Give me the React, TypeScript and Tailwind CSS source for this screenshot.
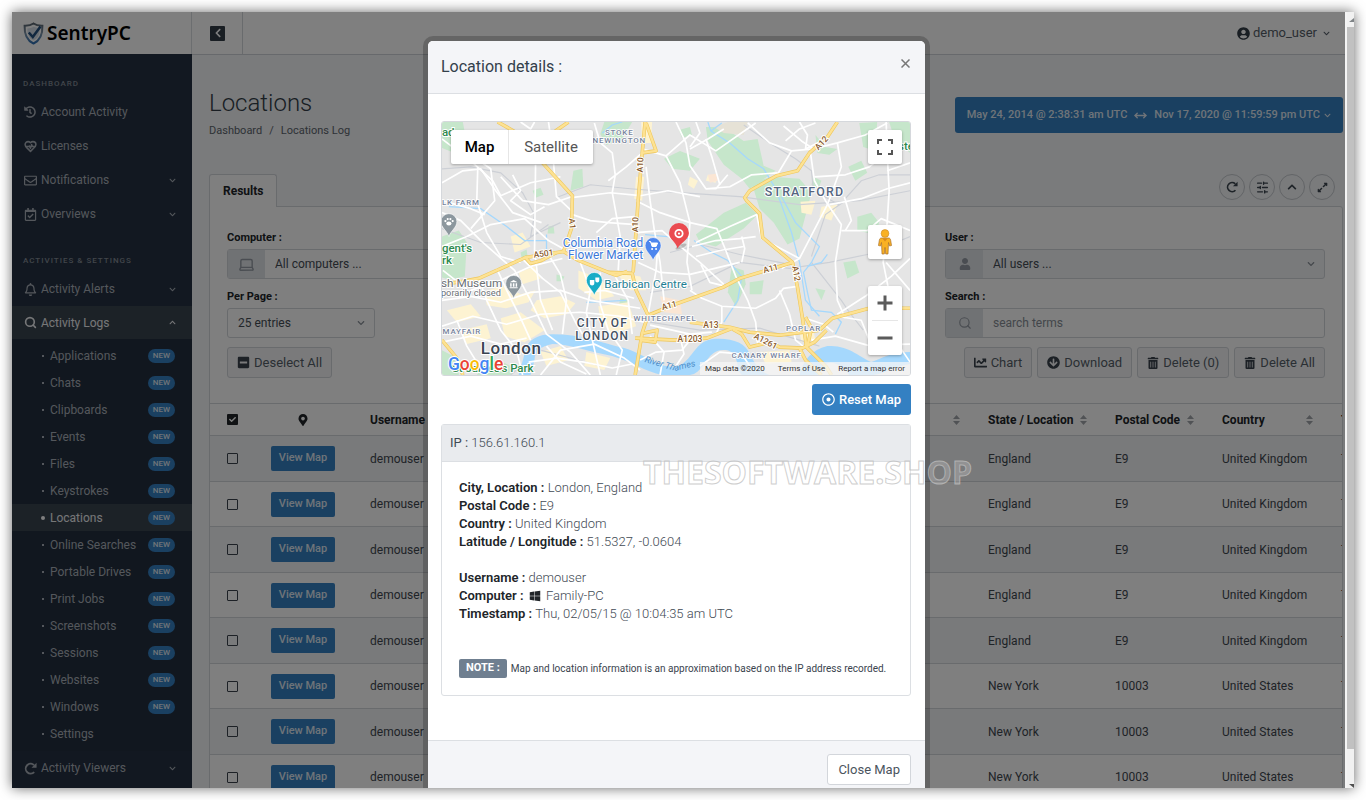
import type { ReactNode } from "react";
import {
  FaArrowCircleDown,
  FaChartLine,
  FaCheck,
  FaChevronDown,
  FaChevronLeft,
  FaChevronUp,
  FaExpandAlt,
  FaHistory,
  FaMapMarkerAlt,
  FaMinusSquare,
  FaRegBell,
  FaRegCalendarCheck,
  FaRegDotCircle,
  FaRegEnvelope,
  FaTrashAlt,
  FaUser,
  FaUserCircle,
  FaWindows,
} from "react-icons/fa";
import { LuHeartPulse, LuLaptop, LuMoveHorizontal, LuSearch, LuSlidersHorizontal } from "react-icons/lu";

const LOG_ITEMS = [
  "Applications", "Chats", "Clipboards", "Events", "Files", "Keystrokes", "Locations", "Online Searches",
  "Portable Drives", "Print Jobs", "Screenshots", "Sessions", "Websites", "Windows", "Settings",
];

const UK = ["England", "E9", "United Kingdom"];
const US = ["New York", "10003", "United States"];
const ROWS = [UK, UK, UK, UK, UK, US, US, US];

function RedoIcon({ size }: { size: number }) {
  return (
    <svg width={size} height={size} viewBox="0 0 14 14" aria-hidden="true">
      <path d="M11 10.800A5.300 5.300 0 1 1 10.800 3.300" fill="none" stroke="currentColor" strokeWidth="2" />
      <path d="M13.500 0.800V6.200H8.100Z" fill="currentColor" />
    </svg>
  );
}

function NavItem({ icon, label, chevron, active }: { icon: ReactNode; label: string; chevron?: "up" | "down"; active?: boolean }) {
  return (
    <a
      href="#"
      className={
        active
          ? "flex h-[33px] items-center bg-[#39444f] pr-4 pl-3 text-[#eceef0]"
          : "flex h-[34px] items-center pr-4 pl-3 text-[#a9afb8]"
      }
    >
      <span className="flex w-[17px] shrink-0">{icon}</span>
      <span className="flex-1">{label}</span>
      {chevron === "down" && <FaChevronDown size={7} />}
      {chevron === "up" && <FaChevronUp size={7} />}
    </a>
  );
}

function Sidebar() {
  return (
    <nav className="flex-1 overflow-hidden bg-[#243142] text-xs">
      <h2 className="mt-[25px] mb-[6px] pl-[11px] text-[8px] leading-[10px] font-medium tracking-[1px] text-[#838b96]">DASHBOARD</h2>
      <NavItem icon={<FaHistory size={12} />} label="Account Activity" />
      <NavItem icon={<LuHeartPulse size={13} strokeWidth={2.8} />} label="Licenses" />
      <NavItem icon={<FaRegEnvelope size={13} />} label="Notifications" chevron="down" />
      <NavItem icon={<FaRegCalendarCheck size={13} />} label="Overviews" chevron="down" />
      <h2 className="mt-[25px] mb-[6px] pl-[11px] text-[8px] leading-[10px] font-medium tracking-[1px] text-[#838b96]">
        ACTIVITIES &amp; SETTINGS
      </h2>
      <NavItem icon={<FaRegBell size={13} />} label="Activity Alerts" chevron="down" />
      <NavItem icon={<LuSearch size={13} strokeWidth={3} />} label="Activity Logs" chevron="up" active />
      <ul className="bg-[#222e3e] pt-[3px] pb-1">
        {LOG_ITEMS.map((item) => {
          const current = item === "Locations";
          return (
            <li key={item}>
              <a
                href="#"
                className={
                  current
                    ? "flex h-[27px] items-center bg-[#39444f] pr-[17px] pl-[29px] text-[#eceef0]"
                    : "flex h-[27px] items-center pr-[17px] pl-[30px] text-[#a9afb8]"
                }
              >
                <span className={current ? "mr-[5px] size-1 rounded-full bg-white" : "mr-[6px] size-[2px] bg-[#a9afb8]"} />
                <span className="flex-1">{item}</span>
                {item !== "Settings" && (
                  <span className="flex h-[14px] items-center rounded-full bg-[#3480c2] px-[5px] text-[8px] leading-none font-medium text-[#dfe8f2]">
                    NEW
                  </span>
                )}
              </a>
            </li>
          );
        })}
      </ul>
      <NavItem icon={<RedoIcon size={13} />} label="Activity Viewers" chevron="down" />
    </nav>
  );
}

function Logo() {
  return (
    <a href="#" className="flex h-[42px] shrink-0 items-center gap-[3px] border-r border-[#d9dce0] bg-white pl-[11px]">
      <svg width="21" height="23" viewBox="0 0 21 23" aria-hidden="true">
        <defs>
          <linearGradient id="shield" x1="0" y1="0" x2="0" y2="1">
            <stop offset="0" stopColor="#5a6570" />
            <stop offset="0.5" stopColor="#7d93a8" />
            <stop offset="1" stopColor="#2d6fb4" />
          </linearGradient>
        </defs>
        <path
          d="M10.500 1.500C8 3.300 5 3.800 1.600 3.700C1.300 12 3 18 10.500 21.500C18 18 19.700 12 19.400 3.700C16 3.800 13 3.300 10.500 1.500Z"
          fill="none"
          stroke="url(#shield)"
          strokeWidth="2"
        />
        <path d="M10.500 4.800C8.700 5.900 6.500 6.400 4.300 6.400C4.400 12 5.800 16 10.500 18.500C15.200 16 16.600 12 16.700 6.400" fill="#d7dfe8" />
        <path d="M5.800 10.500L9.800 15L17.500 4.500" fill="none" stroke="#25507f" strokeWidth="2.6" />
      </svg>
      <span className="font-['Noto_Sans','Open_Sans',sans-serif] text-[19px] leading-none font-semibold text-black">SentryPC</span>
    </a>
  );
}

const toolClass = "flex size-[26px] items-center justify-center rounded-full border border-[#c5c9ce] text-[#3c4650]";
const actionClass =
  "flex h-[31px] items-center gap-1 rounded-[3px] border border-[#d3d6db] bg-[#f4f5f7] px-[9px] text-[13px] text-[#555e68]";
const labelClass = "block text-[11px] leading-[14px] font-bold text-[#212529]";

function SortIcon() {
  return (
    <svg width="7" height="10" viewBox="0 0 7 10" className="shrink-0 fill-[#a0a5ab]" aria-hidden="true">
      <path d="M3.500 0L7 4H0ZM3.500 10L7 6H0Z" />
    </svg>
  );
}

function Th({ children, width }: { children: string; width: string }) {
  return (
    <th className={width}>
      <div className="flex items-center justify-between pr-[10px] pl-[18px] text-left font-bold whitespace-nowrap">
        <span>{children}</span>
        <SortIcon />
      </div>
    </th>
  );
}

function Filters() {
  return (
    <form className="px-[17px] pt-6 pb-[25px]">
      <div className="flex justify-between">
        <div className="w-[380px]">
          <label htmlFor="computer" className={labelClass}>Computer :</label>
          <div className="mt-1 flex h-[30px] rounded-[3px] border border-[#d3d6db]">
            <span className="flex w-[37px] items-center justify-center bg-[#e1e4e8] text-[#949ba4]">
              <LuLaptop size={17} />
            </span>
            <select id="computer" className="flex-1 appearance-none px-[10px] text-xs text-[#444c55] outline-none">
              <option>All computers ...</option>
            </select>
          </div>
          <label htmlFor="perpage" className={labelClass + " mt-[11px]"}>Per Page :</label>
          <div className="mt-1 flex h-[30px] w-[148px] items-center rounded-[3px] border border-[#d3d6db] pr-[9px]">
            <select id="perpage" className="flex-1 appearance-none px-[10px] text-xs text-[#444c55] outline-none">
              <option>25 entries</option>
            </select>
            <FaChevronDown size={8} className="text-[#8a9199]" />
          </div>
        </div>
        <div className="w-[380px]">
          <label htmlFor="user" className={labelClass}>User :</label>
          <div className="mt-1 flex h-[30px] items-center rounded-[3px] border border-[#d3d6db] bg-[#f2f4f6] pr-[9px]">
            <span className="flex w-[37px] items-center justify-center self-stretch bg-[#e1e4e8] text-[#949ba4]">
              <FaUser size={12} />
            </span>
            <select id="user" className="flex-1 appearance-none px-[10px] text-xs text-[#444c55] outline-none">
              <option>All users ...</option>
            </select>
            <FaChevronDown size={8} className="text-[#8a9199]" />
          </div>
          <label htmlFor="search" className={labelClass + " mt-[11px]"}>Search :</label>
          <div className="mt-1 flex h-[30px] rounded-[3px] border border-[#d3d6db]">
            <span className="flex w-[37px] items-center justify-center bg-[#e1e4e8] text-[#949ba4]">
              <LuSearch size={14} />
            </span>
            <input id="search" type="text" placeholder="search terms" className="flex-1 px-[10px] text-xs outline-none placeholder:text-[#868d95]" />
          </div>
        </div>
      </div>
      <div className="mt-[9px] flex gap-[5px]">
        <button type="button" className={actionClass + " mr-auto"}>
          <FaMinusSquare size={13} className="text-[#3a434d]" /> Deselect All
        </button>
        <button type="button" className={actionClass}>
          <FaChartLine size={13} className="text-[#3a434d]" /> Chart
        </button>
        <button type="button" className={actionClass}>
          <FaArrowCircleDown size={13} className="text-[#3a434d]" /> Download
        </button>
        <button type="button" className={actionClass}>
          <FaTrashAlt size={12} className="text-[#3a434d]" /> Delete (0)
        </button>
        <button type="button" className={actionClass}>
          <FaTrashAlt size={12} className="text-[#3a434d]" /> Delete All
        </button>
      </div>
    </form>
  );
}

function LogTable() {
  return (
    <table className="w-full table-fixed border-collapse text-xs text-[#3f474f]">
      <thead>
        <tr className="h-[32px] border-y border-[#d3d6db] text-[#212529]">
          <th className="w-[44px]">
            <span className="relative mx-auto flex size-[11px]">
              <input type="checkbox" defaultChecked aria-label="Select all" className="size-[11px] appearance-none rounded-[1px] bg-[#212529]" />
              <FaCheck size={7} className="pointer-events-none absolute top-[2px] left-[2px] text-white" />
            </span>
          </th>
          <th className="w-[98px]">
            <FaMapMarkerAlt size={12} className="mx-auto" />
          </th>
          <Th width="w-[618px]">Username</Th>
          <Th width="w-[127px]">State / Location</Th>
          <Th width="w-[107px]">Postal Code</Th>
          <Th width="w-[119px]">Country</Th>
          <th className="overflow-hidden pl-[18px] text-left whitespace-nowrap">T</th>
        </tr>
      </thead>
      <tbody>
        {ROWS.map((cells, i) => (
          <tr key={i} className="border-b border-[#d3d6db] odd:h-[46px] odd:bg-[#f2f4f6] even:h-[45px]">
            <td>
              <input type="checkbox" aria-label="Select row" className="mx-auto block size-[11px] appearance-none rounded-[1px] border border-[#3a434d]" />
            </td>
            <td>
              <button type="button" className="mx-auto block h-[25px] rounded-[2px] bg-[#3480c2] px-2 text-[11px] font-medium text-[#dfe8f2]">
                View Map
              </button>
            </td>
            <td className="pl-[18px]">demouser</td>
            {cells.map((c) => (
              <td key={c} className="pl-[18px] whitespace-nowrap">{c}</td>
            ))}
            <td className="overflow-hidden pl-[18px] whitespace-nowrap">T</td>
          </tr>
        ))}
      </tbody>
    </table>
  );
}

const PARKS = [
  "M441 121H462L464 132L466 157L441 147Z",
  "M604 121H632L622 138L606 144L600 133Z",
  "M573 170L582 168L583 186L570 190Z",
  "M532 190L540 187L543 194L535 197Z",
  "M520 252L526 249L527 256L521 258Z",
  "M441 236L458 230L466 242L464 276L448 279L441 277Z",
  "M664 158L680 150L700 158L690 170L672 168Z",
  "M706 126L724 126L744 140L758 138L764 165L776 170L750 188L742 178L724 164L708 140Z",
  "M752 182L772 176L800 178L812 192L800 238L788 244L774 222L760 208Z",
  "M696 234L724 212L746 202L758 214L744 228L716 246L700 242Z",
  "M860 122L878 121L876 150L864 146Z",
  "M890 121H911V152L896 140Z",
  "M816 134L826 146L838 148L830 154L818 152Z",
  "M849 166L862 160L868 172L856 180Z",
  "M814 176L822 180L819 188L812 184Z",
  "M858 216L872 212L880 222L876 234L858 230Z",
  "M844 262L856 260L860 272L848 278Z",
  "M732 266L744 270L746 284L740 298L736 306L728 292Z",
  "M750 282L764 280L762 294L750 294Z",
  "M482 368L500 361L514 368L510 375H476Z",
  "M441 350L456 358L458 375H441Z",
  "M679 129L690 126L692 134L682 137Z",
  "M816 288L826 290L822 300Z",
  "M556 274L564 276L562 281L556 281Z",
  "M620 298L628 300L626 305L619 304Z",
  "M548 226L553 225L554 233L547 233Z",
];

const BUILDINGS = [
  "M484 291L504 285L520 294L535 290L528 302L505 308L486 305Z",
  "M536 300L560 296L575 303L566 314L544 318L530 310Z",
  "M446 310L470 304L480 316L456 322Z",
  "M500 318L520 312L544 330L524 342L504 336Z",
  "M460 330L486 324L490 338L466 344Z",
  "M578 270L600 278L614 296L596 300L578 288Z",
  "M598 306L628 302L636 326L612 334L600 320Z",
  "M616 272L640 276L646 290L630 290Z",
  "M510 236L522 232L530 246L514 252Z",
  "M518 272L534 266L540 278L522 284Z",
  "M586 352L610 358L604 370L584 366Z",
  "M540 352L560 346L568 360L546 366Z",
  "M641 121L652 121L651 142L642 142Z",
  "M636 176L644 176L642 200L634 198Z",
  "M801 201L816 200L812 214L802 212Z",
  "M822 206L838 204L832 220L820 216Z",
  "M800 332L814 330L816 340L802 342Z",
  "M760 352L790 350L792 362L766 364Z",
  "M690 176L698 180L694 188L688 184Z",
  "M708 174L716 176L716 182L706 180Z",
];

const STREETS = [
  "M441 138L470 160L492 180L500 195L530 182L560 176",
  "M441 182L462 170L480 168L495 190L512 212L541 222",
  "M464 150L490 168L494 200L482 214L470 228",
  "M477 166L476 200L486 232L500 256L520 262",
  "M500 176L522 200L548 204L571 196",
  "M512 174L520 190L510 200L530 214L544 206",
  "M535 164L534 250L540 300L552 330",
  "M548 121L552 150L556 196L571 210",
  "M571 197L610 192L640 195L668 190L700 196",
  "M594 122L600 142L612 152L615 174L612 192L620 236L618 270",
  "M572 214L590 220L608 222L636 224",
  "M596 232L612 218L634 216",
  "M608 180L626 166L642 152",
  "M642 148L666 155L690 134L716 150L756 122",
  "M666 155L680 182L690 222L687 262L692 290",
  "M676 121L686 142L690 165L706 188L716 188L728 174",
  "M690 148L708 138L724 128",
  "M706 138L712 156L720 184",
  "M706 188L730 186L752 174L778 172",
  "M696 242L730 226L757 214L762 238L800 258",
  "M690 222L717 228L726 250L736 276L748 300L756 322L758 345",
  "M701 264L710 282L726 286",
  "M692 246L716 240L740 238L756 236",
  "M696 256L720 250L744 246",
  "M742 236L745 248L742 262",
  "M646 166L650 200L654 228L660 262L664 300",
  "M636 232L662 230L678 244L700 262L724 284",
  "M636 200L660 212L690 222",
  "M638 262L660 272L690 274L740 262",
  "M658 240L656 270L648 314",
  "M690 290L702 298L722 306L756 308L776 298L784 288L798 286",
  "M722 306L722 322L716 334",
  "M780 290L790 314L796 340L806 348",
  "M777 175L792 150L814 148L838 142L866 134L888 122",
  "M792 150L770 142L748 122",
  "M784 125L802 140L814 148",
  "M800 121L808 134L806 148L822 140",
  "M786 140L800 128L816 122",
  "M838 142L842 166L828 204L800 258L782 268",
  "M811 152L815 180L826 200L842 224L836 262L838 300L846 318",
  "M815 176L846 174L870 166L888 152L887 121",
  "M830 204L862 198L888 188L911 182",
  "M842 230L868 230L882 218L911 230",
  "M845 196L852 220L846 230",
  "M838 314L866 296L892 276L911 258",
  "M838 316L862 320L870 340L880 352",
  "M888 152L890 190L888 222L884 262L890 292L896 340L911 362",
  "M887 262L911 290",
  "M812 340L836 336L868 345L911 344",
  "M806 318L824 324L834 332",
  "M441 212L460 220L480 240L514 270L530 300L546 334L570 352L590 375",
  "M441 246L466 236L490 224L524 218L548 240L566 250",
  "M470 290L500 280L530 266L562 258",
  "M478 278L486 300L500 330L516 350L522 375",
  "M441 300L470 296L500 302L530 292L560 290L590 300L640 308",
  "M441 326L472 316L506 324L540 314L580 312L620 316L644 322",
  "M520 257L542 278L560 292L574 320L582 334",
  "M496 268L506 290L520 318L530 340",
  "M548 254L560 274L566 300L562 334",
  "M580 262L590 290L586 312L592 340L600 375",
  "M600 272L600 304L608 330L622 350L616 375",
  "M614 274L628 300L632 334",
  "M441 342L470 336L500 344L526 338",
  "M456 320L466 346L484 375",
  "M584 292L604 290L634 298",
  "M540 375L560 350L594 344L624 358L640 370",
  "M546 346L560 362L586 374",
  "M528 362L556 358L584 362L612 368L632 364",
  "M650 336L664 352L660 375",
  "M640 360L656 352L682 350L690 340",
  "M680 336L684 354L676 366",
  "M650 325L690 334L712 332",
  "M700 366L720 352L742 354L750 366",
  "M442 270L460 284L478 278",
  "M441 200L470 208L484 214",
  "M520 121L530 128L534 121",
  "M696 121L700 132L690 146",
  "M888 170L911 162",
];

const RAILS = [
  "M441 168L470 166L500 172L522 192L534 214L530 236L560 222",
  "M558 196L590 184L630 188L680 192L740 196L800 204L860 200L911 190",
  "M744 124L770 142L796 158L812 170L814 190L840 204",
  "M650 292L690 286L740 262L790 268L830 262L868 254L911 236",
  "M441 228L480 242L520 244L548 224",
  "M846 198L862 180L880 174L911 174",
  "M864 330L850 312L842 300L812 262",
  "M670 252L700 244L740 254L790 264",
  "M510 375L540 350L600 366",
  "M812 256L826 214L846 200",
  "M650 322L700 330L760 328L820 346",
];

const YELLOW_ROADS = [
  "M497 121L513 130L526 142L543 163L572 195L571 228L568 237L563 251",
  "M568 121L555 130L545 136",
  "M645 121L642 153L638 200L635 243L633 272",
  "M646 122L656 150L642 152",
  "M441 284L462 281L478 278L525 257L563 251L578 260L608 272L632 273L636 290L648 315L642 333L635 375",
  "M524 256L530 263L541 260L556 252",
  "M608 272L616 275L627 271",
  "M648 315L675 304L723 287L740 278L793 262",
  "M838 121L828 136L810 152L798 170L777 175L750 190L745 197L747 200L760 213L763 237L793 262L798 287L803 318L807 347L827 367L832 375",
  "M690 322L730 327L750 332L780 335L820 330L833 318L870 308L911 308",
  "M635 338L675 340L707 338L733 328",
  "M733 329L742 334L750 347L770 342L780 347L803 348L815 342L827 330",
  "M643 333L657 330L655 342L640 340",
  "M800 348L806 360L822 375",
  "M806 317L812 328L808 346",
  "M441 340L456 358L462 375",
];

const WATER = [
  "M518 375C520 366 524 358 524 350C528 340 536 334 552 334C580 334 600 342 624 348C646 355 656 366 672 367C692 366 692 342 712 339C730 337 746 342 750 354C756 366 762 372 770 375H742C736 370 740 352 726 350C708 348 706 368 694 374L690 375H662C646 372 632 362 612 356C590 352 568 344 552 344C540 346 534 352 534 360L530 375Z",
  "M800 375C804 360 812 350 828 346C848 344 862 358 872 362C884 358 892 352 911 352V364C896 366 886 374 874 375H850C844 366 834 360 826 364L818 375Z",
];

const CREEKS = [
  "M708 121L711 130L730 142L748 158L764 168L776 188L784 210L792 232L800 262L806 300L820 316",
  "M711 130L722 122",
  "M782 196L796 222L820 246L812 262L804 272L808 292L812 310L832 312L842 322L836 334",
  "M828 254L822 262L808 266",
  "M448 206L480 208L506 226L524 240L546 240",
  "M546 234V258",
  "M694 240L712 252L728 260L742 276L738 300L724 322",
  "M645 234L690 238",
  "M586 302L626 300",
  "M602 132L612 124L622 121",
];

function Pin({ x, y, color }: { x: number; y: number; color: string }) {
  return (
    <path
      transform={`translate(${x} ${y})`}
      d="M0 0C-2 -6 -8 -9 -8 -15A8 8 0 0 1 8 -15C8 -9 2 -6 0 0Z"
      fill={color}
      stroke="#fff"
      strokeWidth="0.600"
    />
  );
}

function MapDrawing() {
  return (
    <svg
      viewBox="441 121 470 254"
      preserveAspectRatio="xMidYMid slice"
      className="absolute inset-0 size-full font-['Roboto',sans-serif]"
      role="img"
      aria-label="Map of London"
    >
      <rect x="441" y="121" width="470" height="254" fill="#e5e5e5" />
      <g fill="#c6e6cb">{PARKS.map((d) => <path key={d} d={d} />)}</g>
      <path d="M714 126L728 121H748L744 134L724 132Z" fill="#e6e2d6" />
      <g fill="#fdf3d2">{BUILDINGS.map((d) => <path key={d} d={d} />)}</g>
      <g fill="#fbe6d4">
        <path d="M708 174L716 173L718 180L710 182Z" />
        <path d="M660 296L680 300L682 314L664 312Z" />
      </g>
      <g fill="none" stroke="#cdd0d6" strokeWidth="1.200">{RAILS.map((d) => <path key={d} d={d} />)}</g>
      <g fill="#a5d8fd">{WATER.map((d) => <path key={d} d={d} />)}</g>
      <g fill="none" stroke="#a5d8fd" strokeWidth="1.300">{CREEKS.map((d) => <path key={d} d={d} />)}</g>
      <g fill="none" stroke="#fff" strokeWidth="1.700" strokeLinejoin="round">{STREETS.map((d) => <path key={d} d={d} />)}</g>
      <g fill="none" stroke="#eec75c" strokeWidth="3.600" strokeLinejoin="round">{YELLOW_ROADS.map((d) => <path key={d} d={d} />)}</g>
      <g fill="none" stroke="#fde293" strokeWidth="2.400" strokeLinejoin="round">{YELLOW_ROADS.map((d) => <path key={d} d={d} />)}</g>

      <g fill="#8a5a2b" stroke="#fff" strokeWidth="2" paintOrder="stroke" fontSize="8.500" fontWeight="500" textAnchor="middle">
        <text transform="translate(640 164) rotate(-88)" y="3">A10</text>
        <text transform="translate(635 224) rotate(-88)" y="3">A10</text>
        <text transform="translate(572 223) rotate(86)" y="3">A1</text>
        <text transform="translate(543 253) rotate(-8)" y="3">A501</text>
        <text transform="translate(822 142) rotate(-48)" y="3">A12</text>
        <text transform="translate(797 273) rotate(80)" y="3">A12</text>
        <text transform="translate(771 268) rotate(-15)" y="3">A11</text>
        <text transform="translate(669 305) rotate(-15)" y="3">A11</text>
        <text x="711" y="328">A13</text>
        <text x="690" y="342">A1203</text>
        <text transform="translate(766 341) rotate(28)" y="3">A1261</text>
      </g>
      <g fill="#76839c" stroke="#fff" strokeWidth="1.500" paintOrder="stroke" fontSize="8" fontWeight="500" letterSpacing="0.800" textAnchor="middle">
        <text x="619" y="134">STOKE</text>
        <text x="619" y="142">NEWINGTON</text>
        <text x="460" y="204">LK FARM</text>
        <text x="461" y="334">MAYFAIR</text>
        <text x="665" y="321">WHITECHAPEL</text>
        <text x="804" y="331">POPLAR</text>
        <text x="767" y="358">CANARY WHARF</text>
      </g>
      <g fill="#54657f" stroke="#fff" strokeWidth="2" paintOrder="stroke" fontSize="12.500" fontWeight="500" letterSpacing="1.100" textAnchor="middle">
        <text x="805" y="195">STRATFORD</text>
        <text x="602" y="327" fill="#44505f" fontSize="12">CITY OF</text>
        <text x="602" y="340" fill="#44505f" fontSize="12">LONDON</text>
      </g>
      <g fill="#2d8a4e" stroke="#fff" strokeWidth="2" paintOrder="stroke" fontSize="11.500" fontWeight="500">
        <text x="441" y="135">ad</text>
        <text x="441" y="252">gent&apos;s</text>
        <text x="441" y="264">rk</text>
        <text x="451" y="372">St James&apos;s Park</text>
        <text x="899" y="149">ste</text>
      </g>
      <g fill="#6b7075" stroke="#fff" strokeWidth="2" paintOrder="stroke">
        <text x="440" y="287" fontSize="11.800">sh Museum</text>
        <text x="440" y="296" fontSize="9.300">porarily closed</text>
      </g>
      <g fill="#3b78d8" stroke="#fff" strokeWidth="2" paintOrder="stroke" fontSize="11.900" textAnchor="end">
        <text x="643" y="247">Columbia Road</text>
        <text x="643" y="259">Flower Market</text>
      </g>
      <text x="604" y="288" fill="#1f7f93" stroke="#fff" strokeWidth="2" paintOrder="stroke" fontSize="11.700">Barbican Centre</text>
      <text transform="translate(644 362) rotate(16)" fill="#4d8ec9" fontSize="9" fontStyle="italic">River Th</text>
      <text transform="translate(675 371) rotate(-14)" fill="#4d8ec9" fontSize="9" fontStyle="italic">ames</text>
      <text x="480" y="354" fill="#3a4350" stroke="#fff" strokeWidth="2" paintOrder="stroke" fontSize="17" fontWeight="500" letterSpacing="0.700">London</text>

      <Pin x={448} y={236} color="#8c979e" />
      <g fill="#fff">
        <ellipse cx="448" cy="223" rx="2.600" ry="2" />
        <circle cx="444.500" cy="220.500" r="1.100" />
        <circle cx="446.800" cy="218.500" r="1.100" />
        <circle cx="449.500" cy="218.500" r="1.100" />
        <circle cx="451.800" cy="220.500" r="1.100" />
      </g>
      <Pin x={513} y={298} color="#8c979e" />
      <path d="M509 282L513 279.500L517 282ZM509.500 283H511V286.500H509.500ZM512.200 283H513.800V286.500H512.200ZM515 283H516.500V286.500H515ZM509 287H517V288H509Z" fill="#fff" />
      <Pin x={653} y={260} color="#4d86ee" />
      <path d="M649 241H650.500L652 246H656L657.500 242.500H651" fill="#fff" stroke="#fff" />
      <circle cx="652" cy="248.500" r="1" fill="#fff" />
      <circle cx="656" cy="248.500" r="1" fill="#fff" />
      <Pin x={594} y={295} color="#19acc6" />
      <path d="M589.500 279.500H594V283C594 286 589.500 286 589.500 283ZM595 277H599V280C599 283 595 283 595 280Z" fill="#fff" />
      <ellipse cx="681" cy="246" rx="6" ry="2" fill="#000" opacity="0.200" transform="rotate(-25 681 246)" />
      <path d="M677.500 248C676 241 669 239 669 232.500A10 10 0 0 1 689 232.500C689 239 680 243 677.500 248Z" fill="#ea4b50" />
      <circle cx="679" cy="233" r="3.700" fill="none" stroke="#fff" strokeWidth="1.800" />
      <circle cx="679" cy="233" r="1.100" fill="#fff" />
      <g stroke="#fff" strokeWidth="2" paintOrder="stroke" fontSize="17.500" fontWeight="500">
        <text x="447" y="370">
          <tspan fill="#4285f4">G</tspan>
          <tspan fill="#ea4335">o</tspan>
          <tspan fill="#fbbc05">o</tspan>
          <tspan fill="#4285f4">g</tspan>
          <tspan fill="#34a853">l</tspan>
          <tspan fill="#ea4335">e</tspan>
        </text>
      </g>
    </svg>
  );
}

const mapControl = "absolute right-2 flex w-[34px] items-center justify-center rounded-[2px] bg-white shadow-[0_1px_3px_rgba(0,0,0,0.3)]";

function LocationMap() {
  return (
    <div className="relative h-[255px] overflow-hidden rounded-[3px] border border-[#d5d8dc]">
      <MapDrawing />
      <div className="absolute top-2 left-[9px] flex h-[34px] rounded-[2px] bg-white text-[15px] shadow-[0_1px_3px_rgba(0,0,0,0.3)]">
        <button type="button" className="w-[58px] border-r border-[#e6e6e6] font-medium text-black">Map</button>
        <button type="button" className="w-[84px] text-[#565656]">Satellite</button>
      </div>
      <button type="button" aria-label="Full screen" className={mapControl + " top-2 h-[34px]"}>
        <svg width="16" height="16" viewBox="0 0 16 16" fill="none" stroke="#555" strokeWidth="2">
          <path d="M1 5V1H5M11 1H15V5M15 11V15H11M5 15H1V11" />
        </svg>
      </button>
      <button type="button" aria-label="Street View" className={mapControl + " top-[103px] h-[34px]"}>
        <svg width="16" height="26" viewBox="0 0 16 26">
          <path
            d="M4.500 9H11.500C13 9 13.500 10 13.700 11.500L14.500 16.500L12.500 17L11.500 13.500L11 25H8.700L8 18.500L7.300 25H5L4.500 13.500L3.500 17L1.500 16.500L2.300 11.500C2.500 10 3 9 4.500 9Z"
            fill="#f9b123"
            stroke="#a9702a"
            strokeWidth="0.700"
          />
          <circle cx="8" cy="4.500" r="3.900" fill="#f9b123" stroke="#c98a2a" strokeWidth="0.600" />
          <path d="M5.500 9.500L8 12.500L10.500 9.500" fill="#d98a1e" />
        </svg>
      </button>
      <div className={mapControl + " top-[164px] flex-col"}>
        <button type="button" aria-label="Zoom in" className="flex h-[34px] items-center">
          <svg width="16" height="16" viewBox="0 0 16 16" stroke="#5b5b5b" strokeWidth="3"><path d="M0.500 8H15.500M8 0.500V15.500" /></svg>
        </button>
        <span className="h-px w-[26px] bg-[#e6e6e6]" />
        <button type="button" aria-label="Zoom out" className="flex h-[34px] items-center">
          <svg width="16" height="16" viewBox="0 0 16 16" stroke="#5b5b5b" strokeWidth="3"><path d="M0.500 8H15.500" /></svg>
        </button>
      </div>
      <div className="absolute right-0 bottom-0 flex h-[13px] items-center gap-[13px] bg-[#f5f5f5]/75 px-[5px] text-[8px] text-[#333]">
        <span>Map data ©2020</span>
        <a href="#">Terms of Use</a>
        <a href="#">Report a map error</a>
      </div>
    </div>
  );
}

function Detail({ label, children }: { label: string; children: ReactNode }) {
  return (
    <div>
      <dt className="inline font-semibold text-[#212529]">{label} : </dt>
      <dd className="inline font-light">{children}</dd>
    </div>
  );
}

function LocationModal() {
  return (
    <section
      role="dialog"
      aria-labelledby="modal-title"
      className="w-full max-w-[497px] self-start rounded-[5px] bg-white text-[#3f4a54] shadow-[0_0_0_5px_rgba(0,0,0,0.2)]"
    >
      <header className="flex h-[53px] items-center justify-between rounded-t-[5px] border-b border-[#dcdfe3] bg-[#f4f5f8] pr-[14px] pl-[13px]">
        <h2 id="modal-title" className="text-base text-[#33404b]">Location details :</h2>
        <button type="button" aria-label="Close" className="mb-2 p-px text-[#777]">
          <svg width="9" height="9" viewBox="0 0 9 9" stroke="currentColor" strokeWidth="1.500"><path d="M0.500 0.500L8.500 8.500M8.500 0.500L0.500 8.500" /></svg>
        </button>
      </header>
      <div className="pt-[27px] pr-[14px] pb-[44px] pl-[13px]">
        <LocationMap />
        <div className="mt-2 flex justify-end">
          <button type="button" className="flex h-[31px] items-center gap-1 rounded-[3px] bg-[#3480c2] px-[10px] text-[13px] font-medium text-white">
            <FaRegDotCircle size={13} /> Reset Map
          </button>
        </div>
        <div className="mt-[9px] rounded-[3px] border border-[#dcdfe3]">
          <div className="flex h-[37px] items-center border-b border-[#dcdfe3] bg-[#e9ebee] pl-2 text-[13px]">
            <span>IP :&nbsp;</span>
            <span className="font-light">156.61.160.1</span>
          </div>
          <dl className="px-[17px] pt-[17px] text-[13px] leading-[18px]">
            <Detail label="City, Location">London, England</Detail>
            <Detail label="Postal Code">E9</Detail>
            <Detail label="Country">United Kingdom</Detail>
            <Detail label="Latitude / Longitude">51.5327, -0.0604</Detail>
            <div className="h-[18px]" />
            <Detail label="Username">demouser</Detail>
            <Detail label="Computer">
              <FaWindows size={12} className="mx-[2px] mb-px inline text-[#212529]" /> Family-PC
            </Detail>
            <Detail label="Timestamp">Thu, 02/05/15 @ 10:04:35 am UTC</Detail>
          </dl>
          <p className="mt-[36px] mb-[17px] flex items-center gap-1 px-[17px] text-[10px] text-[#3a444e]">
            <strong className="flex h-[19px] shrink-0 items-center rounded-[2px] bg-[#6f7f90] px-[7px] text-[11px] font-bold text-white">NOTE :</strong>
            Map and location information is an approximation based on the IP address recorded.
          </p>
        </div>
      </div>
      <footer className="flex justify-end border-t border-[#dcdfe3] bg-[#f4f5f8] px-[14px] py-[13px]">
        <button type="button" className="h-[31px] rounded-[3px] border border-[#d3d6db] bg-white px-[10px] text-[13px] text-[#4b545d]">Close Map</button>
      </footer>
    </section>
  );
}

export default function App() {
  return (
    <div className="h-screen bg-white p-3 font-['Roboto','Liberation_Sans',sans-serif]">
      <div className="relative flex h-full overflow-hidden shadow-[0_0_12px_rgba(0,0,0,0.6)]">
        <div className="relative flex min-w-0 flex-1 overflow-hidden bg-[#f4f6f8]">
          <aside className="flex w-[180px] shrink-0 flex-col">
            <Logo />
            <Sidebar />
          </aside>
          <div className="flex min-w-0 flex-1 flex-col overflow-hidden">
            <header className="flex h-[43px] shrink-0 items-center justify-between border-b border-[#cfd3d8] bg-white pr-[15px]">
              <div className="flex h-full items-center border-r border-[#d3d6db] pr-[17px] pl-[18px]">
                <button type="button" aria-label="Collapse menu" className="flex size-[15px] items-center justify-center rounded-[1px] bg-[#333d47] text-white">
                  <FaChevronLeft size={10} />
                </button>
              </div>
              <button type="button" className="flex items-center text-[13px] text-[#545d67]">
                <FaUserCircle size={13} className="mr-[3px] text-[#333d47]" />
                demo_user
                <FaChevronDown size={7} className="ml-[6px]" />
              </button>
            </header>
            <main className="pt-[33px] pr-[2px] pl-[17px]">
              <div className="flex items-start justify-between">
                <div>
                  <h1 className="text-2xl leading-[30px] font-light text-[#333d47]">Locations</h1>
                  <div className="mt-[6px] flex gap-[7px] text-[11px] leading-[14px] text-[#5c656e]">
                    <a href="#">Dashboard</a>
                    <span>/</span>
                    <span>Locations Log</span>
                  </div>
                </div>
                <button type="button" className="mt-[9px] flex h-[36px] items-center rounded-[3px] bg-[#3480c2] px-3 text-[11px] font-medium text-[#dfe8f2]">
                  May 24, 2014 @ 2:38:31 am UTC
                  <LuMoveHorizontal size={13} strokeWidth={2.500} className="mx-[7px]" />
                  Nov 17, 2020 @ 11:59:59 pm UTC
                  <FaChevronDown size={7} className="ml-1" />
                </button>
              </div>
              <div className="mt-[36px] flex items-start justify-between pr-2">
                <button type="button" className="z-10 -mb-px h-[33px] rounded-t-[3px] border border-b-0 border-[#d3d6db] bg-white px-[13px] text-xs font-bold text-[#212529]">
                  Results
                </button>
                <div className="flex gap-1">
                  <button type="button" aria-label="Reload" className={toolClass}><RedoIcon size={12} /></button>
                  <button type="button" aria-label="Filters" className={toolClass}><LuSlidersHorizontal size={13} strokeWidth={2.500} /></button>
                  <button type="button" aria-label="Collapse" className={toolClass}><FaChevronUp size={10} /></button>
                  <button type="button" aria-label="Expand" className={toolClass}><FaExpandAlt size={11} /></button>
                </div>
              </div>
              <div className="overflow-hidden rounded-tr-[3px] border border-[#d3d6db] bg-white">
                <Filters />
                <LogTable />
              </div>
            </main>
          </div>
          <div className="absolute inset-0 z-20 flex justify-center bg-black/50 pt-[29px] pr-1">
            <LocationModal />
          </div>
        </div>
        <div className="flex w-[9px] shrink-0 flex-col border-l-2 border-[#f4f4f4] bg-[#f1f1f1]">
          <span className="flex h-[15px] items-center justify-end overflow-hidden">
            <svg width="5" height="4" viewBox="0 0 5 4" className="fill-[#7f8487]" aria-hidden="true"><path d="M0 4L5 0V4Z" /></svg>
          </span>
          <span className="flex-1 bg-[#c1c1c1]" />
          <span className="flex h-[39px] items-end justify-end">
            <svg width="5" height="4" viewBox="0 0 5 4" className="fill-[#505050]" aria-hidden="true"><path d="M0 0H5V4Z" /></svg>
          </span>
        </div>
        <p className="pointer-events-none absolute top-[438px] left-[631px] z-30 font-['Open_Sans',sans-serif] text-[32px] leading-[44px] font-bold text-white/20 [-webkit-text-stroke:1px_rgba(190,190,190,0.75)]">
          THESOFTWARE.SHOP
        </p>
      </div>
    </div>
  );
}
